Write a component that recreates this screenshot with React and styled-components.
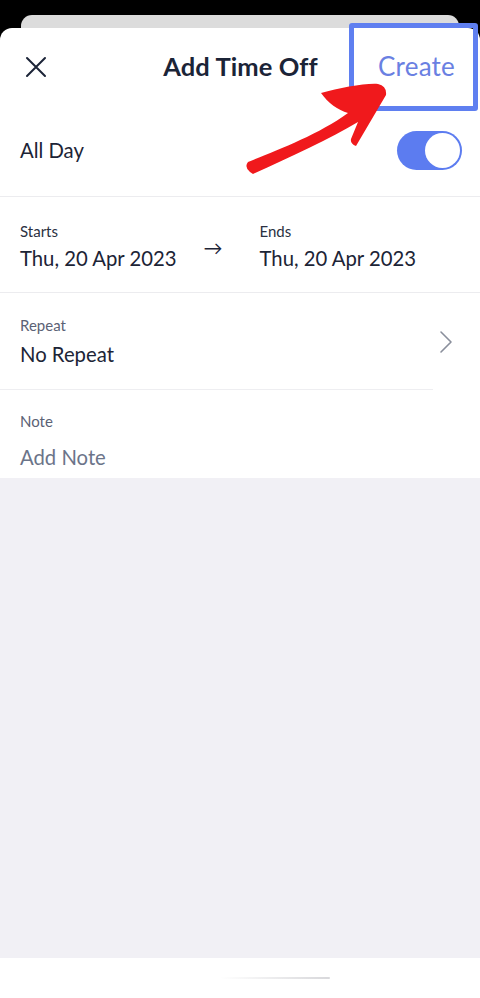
import React from 'react'
import styled, { createGlobalStyle } from 'styled-components'

const GlobalStyle = createGlobalStyle`
  html, body {
    margin: 0;
    padding: 0;
    background: #000;
  }
  body {
    font-family: Lato, "Noto Sans", sans-serif;
    -webkit-font-smoothing: antialiased;
  }
`

function CloseIcon() {
  return (
    <svg width="22" height="22" viewBox="0 0 22 22" fill="none">
      <path d="M2 2 L20 20 M20 2 L2 20" stroke="#1b2437" strokeWidth="2" strokeLinecap="round" />
    </svg>
  )
}

function Chevron() {
  return (
    <svg width="14" height="24" viewBox="0 0 14 24" fill="none">
      <path d="M2 2 L12 12 L2 22" stroke="#8a8f9c" strokeWidth="1.6" strokeLinecap="round" strokeLinejoin="round" />
    </svg>
  )
}

function RedArrow() {
  return (
    <ArrowSvg width="160" height="110" viewBox="0 0 160 110">
      <path
        d="M10 97 Q 4 92 8 87 C 35 76 78 60 108 38 C 98 35 88 28 81 18 C 100 13 125 8 138 9 Q 147 11 146 20 L 116 71 Q 110 69 111 64 L 118 47 C 90 64 50 82 13 99 Z"
        fill="#f0191c"
      />
    </ArrowSvg>
  )
}

export default function App() {
  return (
    <Screen>
      <GlobalStyle />
      <BackCard />
      <Sheet>
        <Header>
          <IconButton><CloseIcon /></IconButton>
          <Title>Add Time Off</Title>
          <CreateButton>Create</CreateButton>
        </Header>

        <Row height={92}>
          <Value>All Day</Value>
          <Toggle><Knob /></Toggle>
        </Row>

        <DateRow>
          <Field>
            <Label dark>Starts</Label>
            <Value>Thu, 20 Apr 2023</Value>
          </Field>
          <Arrow>→</Arrow>
          <Field>
            <Label dark>Ends</Label>
            <Value>Thu, 20 Apr 2023</Value>
          </Field>
        </DateRow>

        <Row height={96} inset>
          <Field spread>
            <Label>Repeat</Label>
            <Value>No Repeat</Value>
          </Field>
          <ChevronWrap><Chevron /></ChevronWrap>
        </Row>

        <NoteBlock>
          <Label>Note</Label>
          <Value muted>Add Note</Value>
        </NoteBlock>

        <Filler />
        <BottomBar>
          <HomeBar />
        </BottomBar>

        <Highlight />
        <RedArrow />
      </Sheet>
    </Screen>
  )
}

const Screen = styled.div`
  width: 480px;
  height: 998px;
  background: #000;
  padding-top: 15px;
  box-sizing: border-box;
  display: flex;
  flex-direction: column;
  overflow: hidden;
`

const BackCard = styled.div`
  height: 13px;
  margin: 0 21px;
  background: #dcdcdc;
  border-radius: 11px 11px 0 0;
  flex-shrink: 0;
`

const Sheet = styled.div`
  position: relative;
  flex: 1;
  background: #fff;
  border-radius: 12px 12px 0 0;
  display: flex;
  flex-direction: column;
`

const Header = styled.div`
  height: 76px;
  display: flex;
  align-items: center;
  justify-content: space-between;
  padding: 0 25px 0 25px;
  flex-shrink: 0;
`

const IconButton = styled.div`
  width: 22px;
  height: 22px;
  display: flex;
  margin-top: 1px;
`

const Title = styled.h1`
  margin: 0 0 0 56px;
  font-size: 25.5px;
  font-weight: 700;
  color: #1b2437;
  letter-spacing: 0.1px;
`

const CreateButton = styled.div`
  font-size: 26px;
  color: #6a80e2;
  letter-spacing: 0.2px;
`

const Row = styled.div`
  height: ${p => p.height}px;
  display: flex;
  align-items: center;
  justify-content: space-between;
  padding: 0 18px 0 20px;
  border-bottom: 1px solid ${p => (p.inset ? '#eeeef1' : '#ececef')};
  margin-right: ${p => (p.inset ? '47px' : '0')};
  padding-right: ${p => (p.inset ? '0' : '18px')};
  position: relative;
  flex-shrink: 0;
`

const DateRow = styled.div`
  height: 96px;
  display: flex;
  align-items: center;
  padding: 3px 20px 0;
  box-sizing: border-box;
  border-bottom: 1px solid #ececef;
  flex-shrink: 0;
`

const Field = styled.div`
  display: flex;
  flex-direction: column;
  gap: ${p => (p.spread ? '8px' : '6px')};
`

const Label = styled.div`
  font-size: 15px;
  color: ${p => (p.dark ? '#2a3142' : '#5b6275')};
`

const Value = styled.div`
  font-size: 20.3px;
  color: ${p => (p.muted ? '#6b7489' : '#1c2436')};
`

const Arrow = styled.div`
  width: 56px;
  margin: 0 0 0 27px;
  font-size: 19px;
  color: #1c2436;
  padding-top: 2px;
`

const Toggle = styled.div`
  width: 65px;
  height: 39px;
  border-radius: 20px;
  background: #5c7cf0;
  display: flex;
  align-items: center;
  justify-content: flex-end;
  padding: 0 2px;
  box-sizing: border-box;
`

const Knob = styled.div`
  width: 35px;
  height: 35px;
  border-radius: 50%;
  background: #fff;
`

const ChevronWrap = styled.div`
  position: absolute;
  right: -20px;
  top: 37px;
  display: flex;
`

const NoteBlock = styled.div`
  height: 88px;
  display: flex;
  flex-direction: column;
  justify-content: center;
  gap: 15px;
  padding: 13px 20px 0;
  box-sizing: border-box;
  flex-shrink: 0;
`

const Filler = styled.div`
  flex: 1;
  background: #f1f0f5;
`

const BottomBar = styled.div`
  height: 40px;
  background: #fff;
  display: flex;
  justify-content: center;
  align-items: center;
  flex-shrink: 0;
`

const HomeBar = styled.div`
  width: 110px;
  height: 2px;
  margin-left: 70px;
  border-radius: 2px;
  background: linear-gradient(90deg, rgba(200,200,205,0), rgba(190,190,195,0.6));
`

const Highlight = styled.div`
  position: absolute;
  left: 349px;
  top: -5px;
  width: 129px;
  height: 88px;
  border: 5px solid #5f7ff0;
  border-radius: 3px;
  box-sizing: border-box;
  pointer-events: none;
`

const ArrowSvg = styled.svg`
  position: absolute;
  left: 240px;
  top: 47px;
  pointer-events: none;
`
